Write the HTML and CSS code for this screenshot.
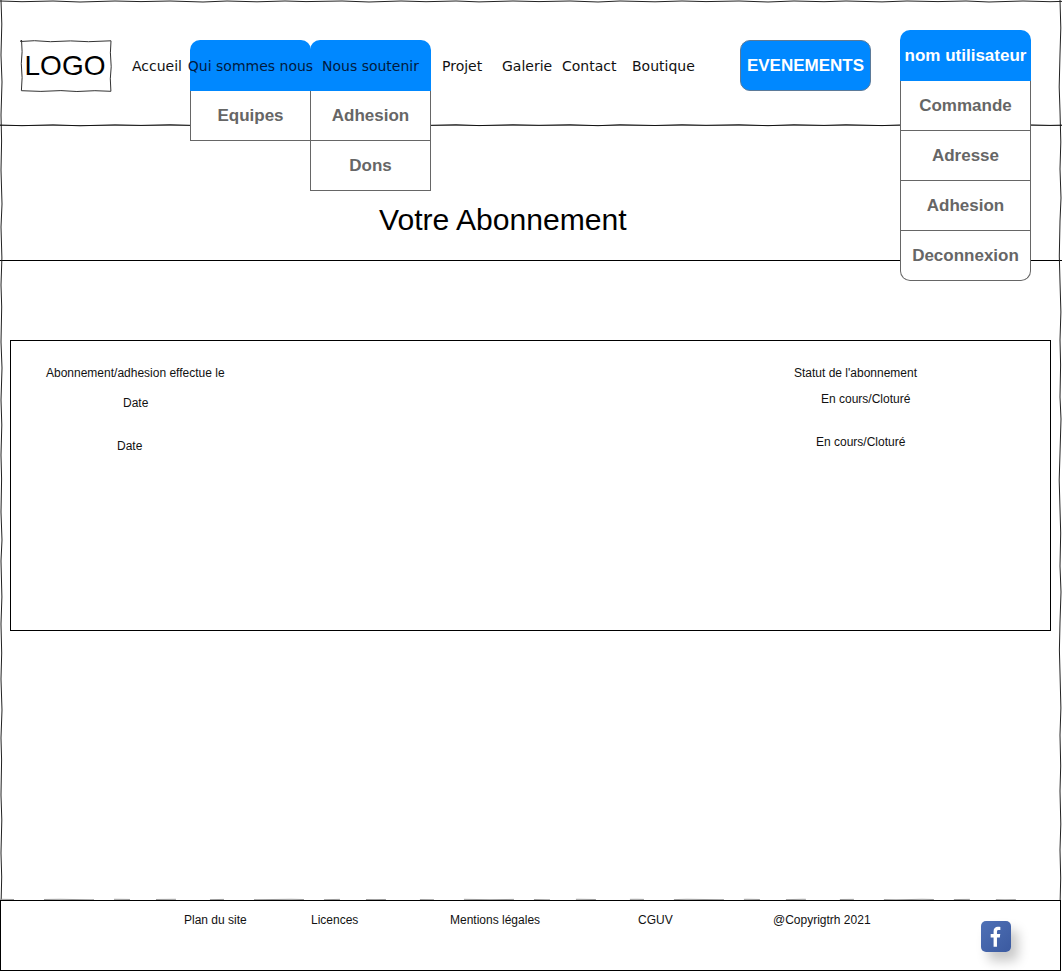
FILE: index.html
```html
<!DOCTYPE html>
<html lang="fr">
<head>
<meta charset="utf-8">
<title>Votre Abonnement</title>
<link rel="stylesheet" href="styles.css">
</head>
<body>
<div class="page">
  <svg class="sketch" viewBox="0 0 1062 901" aria-hidden="true">
    <path class="edge" d="M0 1l22 .7 31-.7 27 1 35-1 26 .6 29-.6 33 1 24-1 30 .8 28-.8 21 .6 36-.6 27 1 32-1 25 .7 30-.7 23 .9 34-.9 26 .6 31-.6 28 1 22-1 35 .8 27-.8 24 .6 33-.6 29 1 26-1 30 .7 22-.7 36 .9 25-.9 31 .6 28-.6 23 1 34-1 27 .7 29-.7 30 .8"/>
    <path class="edge" d="M1 0l.8 24-.8 31 1 27-1 33 .6 26-.6 29 1 34-1 23 .9 31-.9 27 .7 22-.7 35 1 26-1 32 .8 25-.8 30 .6 24-.6 33 1 28-1 21 .9 36-.9 27 .7 29-.7 26 1 31-1 28 .6 22-.6 35 .8 25-.8 33 .7 24-.7 30"/>
    <path class="edge" d="M1060 0l.8 28-.8 26-.8 33 .8 24 .8 31-.8 27 1 29-1 23-.7 35 .7 26 .9 30-.9 28 .6 25-.6 32 1 22-1 34-.8 27 .8 29 .7 24-.7 33 1 26-1 30-.6 28 .6 23 .9 35-.9 27 .7 31-.7 25 .8 33-.8 26 .7 28-.7 30"/>
    <path class="edge" d="M0 125l22 .7 31-.9 27 1 35-1 26 .6 29-.7 33 1 24-1 30 .9 28-.9 21 .6 36-.6 27 1 32-1 25 .7 30-.7 23 .9 34-.9 26 .6 31-.6 28 1 22-1 35 .8 27-.8 24 .6 33-.6 29 1 26-1 30 .7 22-.7 36 .9 25-.9 31 .6 28-.6 23 1 34-1 27 .7 29-.7 30 .8"/>
    <path class="base" d="M0 125.500H1062"/>
    <path class="tear" d="M0 899.300l27 .4 33-.4 31 .5 24-.5 29 .3 35-.3 22 .5 30-.5 26 .4 34-.4 28 .5 25-.5 31 .3 27-.3 36 .5 23-.5 29 .4 32-.4 26 .5 30-.5 24 .3 35-.3 28 .5 22-.5 33 .4 27-.4 31 .5 25-.5 30 .3 29-.3 34 .5 26-.5 23 .4 32-.4 28 .5 36-.5"/>
  </svg>

  <header class="top">
    <div class="logo">
      <svg class="logo-edge" viewBox="0 0 92 52" aria-hidden="true">
        <path d="M.5 1.500l14-.8 16 1 20-.8 18 .8 22.500-.9-.6 12 .8 14-.9 12 .6 12.500-16-.6-18 .8-16-.9-20 .8-19.500-.7.7-13-.8-14 .8-12-.6-12z"/>
      </svg>
      <span>LOGO</span>
    </div>
    <nav class="nav">
      <a class="link accueil">Accueil</a>
      <div class="drop">
        <a class="tab tab-a">Qui sommes nous</a>
        <ul class="menu">
          <li>Equipes</li>
        </ul>
      </div>
      <div class="drop">
        <a class="tab tab-b">Nous soutenir</a>
        <ul class="menu">
          <li>Adhesion</li>
          <li>Dons</li>
        </ul>
      </div>
      <a class="link projet">Projet</a>
      <a class="link galerie">Galerie</a>
      <a class="link contact">Contact</a>
      <a class="link boutique">Boutique</a>
    </nav>
    <a class="event">EVENEMENTS</a>
    <div class="user">
      <div class="user-head">nom utilisateur</div>
      <ul class="user-menu">
        <li>Commande</li>
        <li>Adresse</li>
        <li>Adhesion</li>
        <li>Deconnexion</li>
      </ul>
    </div>
  </header>

  <section class="title-band">
    <h1>Votre Abonnement</h1>
  </section>

  <main class="panel">
    <div class="col">
      <p>Abonnement/adhesion effectue le</p>
      <p class="date-a">Date</p>
      <p class="date-b">Date</p>
    </div>
    <div class="col col-right">
      <p>Statut de l'abonnement</p>
      <p class="state-a">En cours/Cloturé</p>
      <p class="state-b">En cours/Cloturé</p>
    </div>
  </main>

  <footer class="foot">
    <span>Plan du site</span>
    <span>Licences</span>
    <span>Mentions légales</span>
    <span>CGUV</span>
    <span>@Copyrigtrh 2021</span>
    <a class="fb" aria-label="Facebook">
      <svg viewBox="0 0 31 31" aria-hidden="true">
        <path d="M13 26V16.500h-3V13h3v-2.800C13 7.200 14.800 5.500 17.500 5.500c1 0 2 .1 2.500.2v3.200h-1.700c-1.400 0-1.800.7-1.800 1.700V13h3.400l-.5 3.500h-2.900V26z"/>
      </svg>
    </a>
  </footer>
</div>
</body>
</html>
```
FILE: styles.css
```css
* { box-sizing: border-box; }
html, body { margin: 0; padding: 0; background: #fff; }
body { font-family: "Liberation Sans", Arial, sans-serif; color: #000; }
a { color: inherit; text-decoration: none; }
ul { list-style: none; margin: 0; padding: 0; }
p, h1 { margin: 0; font-weight: 400; }

.page { position: relative; width: 1062px; height: 973px; overflow: hidden; }
.sketch { position: absolute; left: 0; top: 0; width: 1062px; height: 901px; }
.sketch path, .logo-edge path { fill: none; }
.sketch .edge { stroke: #222; stroke-width: 1; }
.sketch .base { stroke: #000; stroke-width: .5; }
.sketch .tear { stroke: #999; stroke-width: 1; stroke-dasharray: 14 30 50 20 16 26 20 34; }
.logo-edge path { stroke: #333; stroke-width: 1; }

.top { position: relative; display: flex; align-items: flex-start; height: 126px; padding: 40px 0 0 20px; z-index: 2; }

.logo { position: relative; width: 92px; height: 52px; padding-right: 2px; display: flex; align-items: center; justify-content: center; font-size: 28px; }
.logo-edge { position: absolute; inset: 0; width: 92px; height: 52px; }
.logo span { position: relative; }

.nav { display: flex; font-family: "DejaVu Sans", sans-serif; font-size: 14px; }
.link { height: 51px; line-height: 53px; white-space: nowrap; color: #111; }
.accueil { margin-left: 20px; width: 58px; }
.projet { margin-left: 12px; width: 60px; }
.galerie { width: 60px; }
.contact { width: 70px; }
.boutique { width: 68px; }

.drop { position: relative; width: 120px; height: 51px; }
.tab { display: flex; align-items: center; justify-content: center; height: 51px; width: 121px; background: #0088ff; border-radius: 10px 10px 0 0; color: #001a40; white-space: nowrap; }
.tab-a { position: relative; z-index: 1; }
.menu { position: absolute; left: 0; top: 51px; width: 121px; }
.menu li { height: 50px; display: flex; align-items: center; justify-content: center; background: #fff; border: 1px solid #666; border-top: 0; font: 700 17px "Liberation Sans", Arial, sans-serif; color: #666; }

.event { margin-left: 40px; width: 131px; height: 51px; display: flex; align-items: center; justify-content: center; background: #0088ff; border: 1px solid #5b7a99; border-radius: 10px; color: #fff; font-weight: 700; font-size: 17px; white-space: nowrap; }

.user { margin: -10px 0 0 29px; width: 131px; }
.user-head { height: 51px; display: flex; align-items: center; justify-content: center; background: #0088ff; border-radius: 10px 10px 0 0; color: #fff; font-weight: 700; font-size: 17px; white-space: nowrap; }
.user-menu { background: #fff; border: 1px solid #666; border-top: 0; border-radius: 0 0 10px 10px; }
.user-menu li { height: 50px; display: flex; align-items: center; justify-content: center; border-bottom: 1px solid #666; font-weight: 700; font-size: 17px; color: #666; }
.user-menu li:last-child { height: 49px; border-bottom: 0; }

.title-band { height: 135px; border-bottom: 1px solid #000; display: flex; padding: 76px 0 0 379px; }
h1 { font-size: 30.100px; line-height: 36px; white-space: nowrap; }

.panel { display: flex; justify-content: space-between; width: 1041px; height: 291px; margin: 79px 0 0 10px; padding: 25px 133px 0 35px; border: 1px solid #000; font-size: 12px; line-height: 14px; color: #111; }
.col { display: flex; flex-direction: column; }
.col-right { width: 123px; }
.col p { white-space: nowrap; }
.date-a { margin: 16px 0 0 77px; }
.date-b { margin: 29px 0 0 71px; }
.state-a { margin: 12px 0 0 27px; }
.state-b { margin: 29px 0 0 22px; }

.foot { position: absolute; left: 0; top: 900px; width: 1061px; height: 71px; padding: 12px 0 0 183px; display: grid; grid-template-columns: 127px 139px 188px 135px 208px 1fr; align-items: start; border: 1px solid #000; font-size: 12px; line-height: 14px; color: #111; }
.foot span { white-space: nowrap; }
.fb { display: block; width: 30px; height: 31px; margin-top: 8px; border-radius: 5px; background: linear-gradient(135deg, #4f71b6, #3b5aa0); box-shadow: 7px 9px 12px rgba(0, 0, 0, .22); }
.fb svg { display: block; width: 30px; height: 31px; }
.fb path { fill: #fff; }
```
